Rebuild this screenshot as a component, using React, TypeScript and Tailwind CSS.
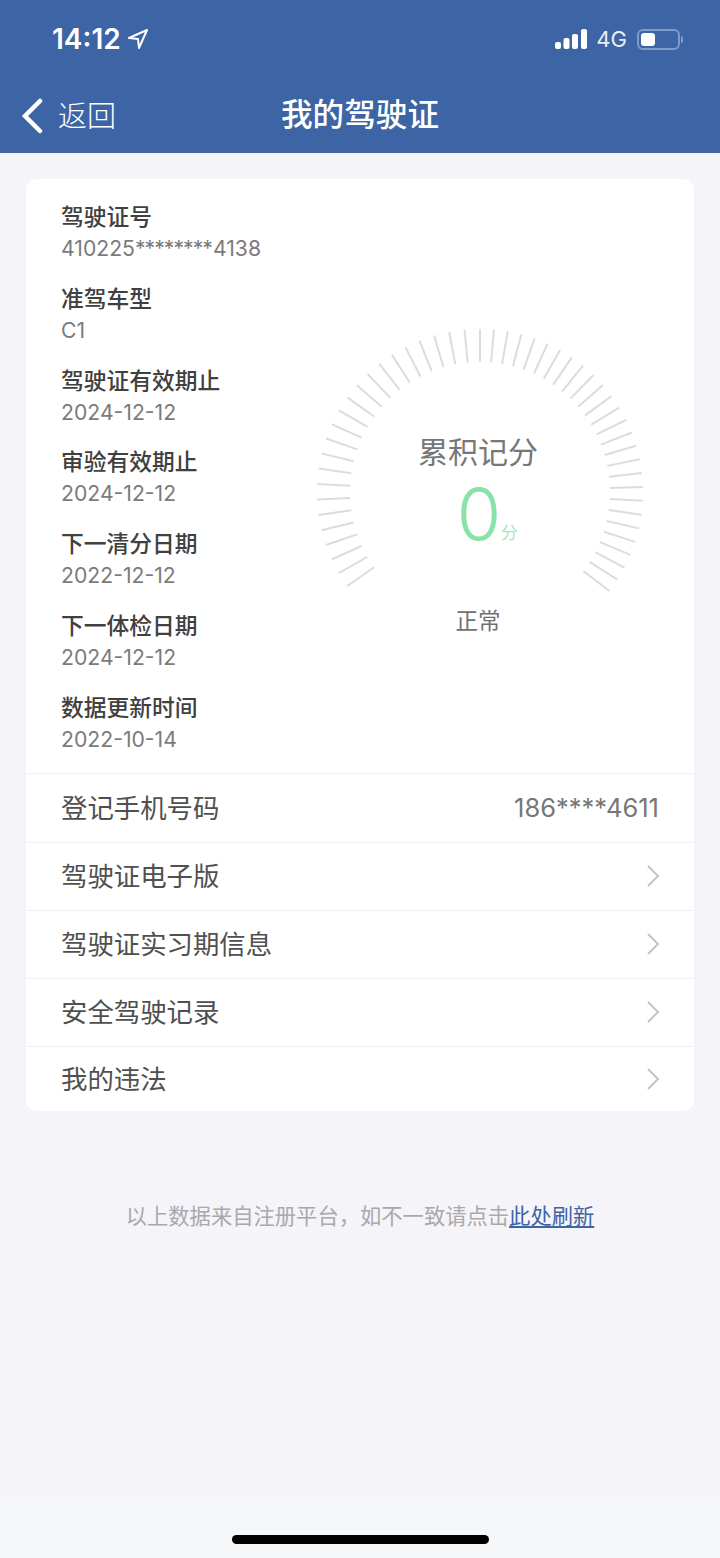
const F = "font-['Inter','Noto_Sans_CJK_SC',sans-serif]";

const info: [string, string, string, string][] = [
  ["驾驶证号", "410225", "********", "4138"],
  ["准驾车型", "C1", "", ""],
  ["驾驶证有效期止", "2024-12-12", "", ""],
  ["审验有效期止", "2024-12-12", "", ""],
  ["下一清分日期", "2022-12-12", "", ""],
  ["下一体检日期", "2024-12-12", "", ""],
  ["数据更新时间", "2022-10-14", "", ""],
];

const rows = ["驾驶证电子版", "驾驶证实习期信息", "安全驾驶记录", "我的违法"];

function Gauge() {
  const ticks: number[] = [];
  for (let i = 0; i <= 26; i++) ticks.push(i * 4.9);
  for (let i = 1; i <= 23; i++) ticks.push(-i * 5.45);
  const cx = 170, cy = 172, ro = 163, ri = 130;
  return (
    <svg width="340" height="290" viewBox="0 0 340 290" className="block">
      {ticks.map((a) => {
        const r = (a * Math.PI) / 180;
        return (
          <line
            key={a}
            x1={cx + ri * Math.sin(r)}
            y1={cy - ri * Math.cos(r)}
            x2={cx + ro * Math.sin(r)}
            y2={cy - ro * Math.cos(r)}
            stroke="#dcdcdc"
            strokeWidth="2"
          />
        );
      })}
    </svg>
  );
}

function Chevron() {
  return (
    <svg width="16" height="26" viewBox="0 0 16 26" fill="none" className="block">
      <path d="M3 3 L13 13 L3 23" stroke="#c4c4c6" strokeWidth="2" />
    </svg>
  );
}

export default function App() {
  return (
    <div className={`${F} w-[720px] h-[1558px] bg-[#f4f4f9] flex flex-col overflow-hidden`}>
      <header className="h-[153px] shrink-0 bg-[#3d64a4] text-white flex flex-col">
        <div className="h-[78px] flex items-center pl-[52px] pr-[37px]">
          <span className="text-[28px] leading-[34px] font-semibold">14:12</span>
          <svg width="22" height="22" viewBox="0 0 22 22" fill="none" className="ml-[6px]">
            <path d="M20 2 L2 10 L11 11 L12 20 Z" stroke="white" strokeWidth="2" strokeLinejoin="round" />
          </svg>
          <div className="ml-auto flex items-center">
            <svg width="32" height="20" viewBox="0 0 32 20" fill="white">
              <rect x="0" y="13" width="6" height="7" rx="2" />
              <rect x="8.5" y="9" width="6" height="11" rx="2" />
              <rect x="17" y="5" width="6" height="15" rx="2" />
              <rect x="26" y="0" width="6" height="20" rx="2" />
            </svg>
            <span className="ml-[9px] text-[22px] leading-[26px] text-[#e8edf5]">4G</span>
            <div className="ml-[10px] w-[43px] h-[21px] rounded-[6px] border-2 border-[#7f9bc6] p-[2px] flex">
              <div className="w-[14px] h-full bg-white rounded-[3px]" />
            </div>
            <div className="ml-[1px] w-[2px] h-[7px] bg-[#7f9bc6] rounded-r-[2px]" />
          </div>
        </div>
        <div className="relative h-[75px] flex items-center justify-center pb-[1px]">
          <div className="absolute left-[20px] top-[18px] flex items-center">
            <svg width="24" height="36" viewBox="0 0 24 36" fill="none">
              <path d="M20 3 L5 18 L20 33" stroke="white" strokeWidth="4.5" strokeLinecap="round" />
            </svg>
            <span className="ml-[14px] mt-[3px] text-[29px] leading-[36px] font-light">返回</span>
          </div>
          <h1 className="text-[31.6px] leading-[40px] font-medium">我的驾驶证</h1>
        </div>
      </header>

      <main className="flex-1 px-[26px] pt-[26px]">
        <section className="bg-white rounded-[10px] h-[932px] flex flex-col">
          <div className="h-[595px] shrink-0 flex border-b border-[#f0f0f0] relative">
            <div className="pl-[35px] pt-[22px] flex flex-col gap-[19.75px]">
              {info.map(([k, a, b, c]) => (
                <div key={k} className="flex flex-col">
                  <span className="text-[22.75px] leading-[32px] font-medium text-[#404040]">{k}</span>
                  <span className="text-[21.2px] leading-[30px] text-[#7b7b7b]">
                    {a}
                    {b && <span className="tracking-[-1px]">{b}</span>}
                    {c && <span className="ml-[1px]">{c}</span>}
                  </span>
                </div>
              ))}
            </div>
            <div className="absolute left-[284px] top-[141px] w-[340px] h-[340px]">
              <Gauge />
              <div className="absolute left-[-2px] right-[2px] top-[112px] flex flex-col items-center">
                <span className="text-[30px] leading-[40px] text-[#777] font-normal">累积记分</span>
                <div className="relative leading-none ml-[2px]">
                  <span className="block text-[72px] leading-[84px] font-light text-[#88e3a8]">0</span>
                  <span className="absolute left-[44px] top-[51px] text-[17px] leading-[20px] text-[#a5e9bd]">分</span>
                </div>
                <span className="mt-[50px] text-[22.5px] leading-[30px] text-[#707070]">正常</span>
              </div>
            </div>
          </div>

          <div className="h-[69px] shrink-0 flex items-center justify-between pl-[35px] pr-[35px] border-b border-[#f0f0f0]">
            <span className="text-[26.4px] leading-[36px] text-[#505050]">登记手机号码</span>
            <span className="text-[25.5px] leading-[36px] text-[#777]">186****4611</span>
          </div>
          {rows.map((r, i) => (
            <div
              key={r}
              className={`${i < 3 ? "h-[68px] pb-[2px] border-b border-[#f0f0f0]" : "h-[64px]"} shrink-0 flex items-center justify-between pl-[35px] pr-[33px]`}
            >
              <span className="text-[26.4px] leading-[36px] text-[#505050]">{r}</span>
              <Chevron />
            </div>
          ))}
        </section>

        <p className="mt-[90px] text-center text-[21.3px] leading-[30px] text-[#a9a9ad]">
          以上数据来自注册平台，如不一致请点击
          <span className="text-[#3d64a4] underline">此处刷新</span>
        </p>
      </main>

      <footer className="h-[60px] shrink-0 bg-[#f6f7f9] flex justify-center pt-[37px] pl-[1px]">
        <div className="w-[257px] h-[9px] rounded-full bg-black" />
      </footer>
    </div>
  );
}
